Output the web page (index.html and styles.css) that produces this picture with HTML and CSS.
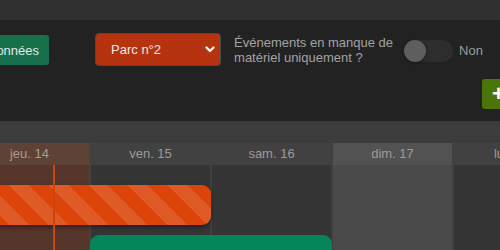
FILE: index.html
```html
<!DOCTYPE html>
<html lang="fr">
<head>
  <meta charset="UTF-8">
  <title>Calendrier</title>
  <link rel="stylesheet" href="styles.css">
</head>
<body>
<div class="topbar"></div>
<div class="toolbar">
  <div class="row">
    <div class="btn btn-green">Données</div>
    <div class="select">
      <span>Parc n°2</span>
      <svg class="chevron" width="10" height="7" viewBox="0 0 10 7"><path d="M1.5 1.5 L5 5 L8.5 1.5" fill="none" stroke="#fff" stroke-width="2.2" stroke-linecap="round" stroke-linejoin="round"/></svg>
    </div>
    <div class="label">Événements en manque de<br>matériel uniquement ?</div>
    <div class="switch"><span class="knob"></span></div>
    <div class="switch-text">Non</div>
  </div>
  <div class="row row-end">
    <div class="btn btn-add">+</div>
  </div>
</div>
<div class="timeline">
  <div class="days">
    <div class="day day-today">
      <div class="day-head">jeu. 14</div>
      <div class="day-body"></div>
    </div>
    <div class="day">
      <div class="day-head">ven. 15</div>
      <div class="day-body"></div>
    </div>
    <div class="day">
      <div class="day-head">sam. 16</div>
      <div class="day-body"></div>
    </div>
    <div class="day day-weekend">
      <div class="day-head">dim. 17</div>
      <div class="day-body"></div>
    </div>
    <div class="day">
      <div class="day-head">lun. 18</div>
      <div class="day-body"></div>
    </div>
    <div class="events">
      <div class="event event-missing" style="left: -20px; width: 261px; top: 20px;"></div>
      <div class="event event-ok" style="left: 120px; width: 242px; top: 70px;"></div>
      <div class="now" style="left: 83px;"></div>
    </div>
  </div>
</div>
</body>
</html>
```

FILE: styles.css
```css
*{
  margin: 0;
  padding: 0;
  box-sizing: border-box;
}
body{
  width: 500px;
  height: 250px;
  overflow: hidden;
  background: #3c3c3c;
  font-family: "Liberation Sans", Arial, sans-serif;
  font-size: 13px;
}
.topbar{
  height: 20px;
  background: #303030;
}
.toolbar{
  height: 101px;
  background: #222222;
  padding-top: 13px;
}
.row{
  display: flex;
  align-items: center;
  margin-left: -23px;
}
.row-end{
  justify-content: flex-end;
  margin-left: 0;
  margin-right: -18px;
  margin-top: 13px;
}
.btn{
  display: flex;
  align-items: center;
  height: 30px;
  padding: 0 10px;
  border-radius: 3px;
  color: #e6e6e6;
  font-size: 13px;
}
.btn-green{
  background: #15704b;
  margin-top: 1px;
}
.btn-add{
  width: 36px;
  background: #4a7508;
  color: #fff;
  font-size: 22px;
  font-weight: bold;
}
.select{
  display: flex;
  align-items: center;
  justify-content: space-between;
  width: 126px;
  height: 33px;
  margin-left: 46px;
  padding: 0 5px 0 15px;
  background: #b5330f;
  border: 1px solid #4a4a4a;
  border-radius: 4px;
  color: #f2e6e2;
  font-size: 13px;
}
.label{
  margin-left: 13px;
  margin-top: 1px;
  width: 160px;
  line-height: 15px;
  color: #a2a2a2;
}
.switch{
  position: relative;
  width: 49px;
  height: 22px;
  margin-left: 10px;
  margin-top: 2px;
  border-radius: 11px;
  background: #2d2d2d;
}
.knob{
  position: absolute;
  left: 0;
  top: 0;
  width: 22px;
  height: 22px;
  border-radius: 50%;
  background: #5e5e5e;
  box-shadow: 0 1px 3px rgba(0,0,0,.5);
}
.switch-text{
  margin-left: 6px;
  margin-top: 2px;
  color: #9c9c9c;
}
.timeline{
  padding-top: 22px;
}
.days{
  position: relative;
  display: flex;
  margin-left: -30px;
  height: 107px;
}
.day{
  flex: 0 0 121px;
  display: flex;
  flex-direction: column;
  border-right: 2px solid #404040;
}
.day-head{
  height: 22px;
  line-height: 22px;
  text-align: center;
  color: #9b9b9b;
  background: #414141;
}
.day-body{
  flex: 1;
  background: #353535;
}
.day-today{
  border-right-color: #444;
}
.day-today .day-head{
  background: #5f4236;
  color: #a89a94;
}
.day-today .day-body{
  background: #56352a;
}
.day-weekend .day-head{
  background: #525252;
}
.day-weekend .day-body{
  background: #4a4a4a;
}
.events{
  position: absolute;
  left: 0;
  top: 22px;
  right: 0;
  bottom: 0;
}
.event{
  position: absolute;
  height: 40px;
  border-radius: 9px;
}
.event-missing{
  background: repeating-linear-gradient(45deg, #dd4409 0 14px, #e05a27 14px 28px);
  box-shadow: 0 2px 4px rgba(0,0,0,.45);
}
.event-ok{
  background: #04855a;
}
.now{
  position: absolute;
  top: 0;
  bottom: 0;
  width: 2px;
  background: #c9470f;
}
```
